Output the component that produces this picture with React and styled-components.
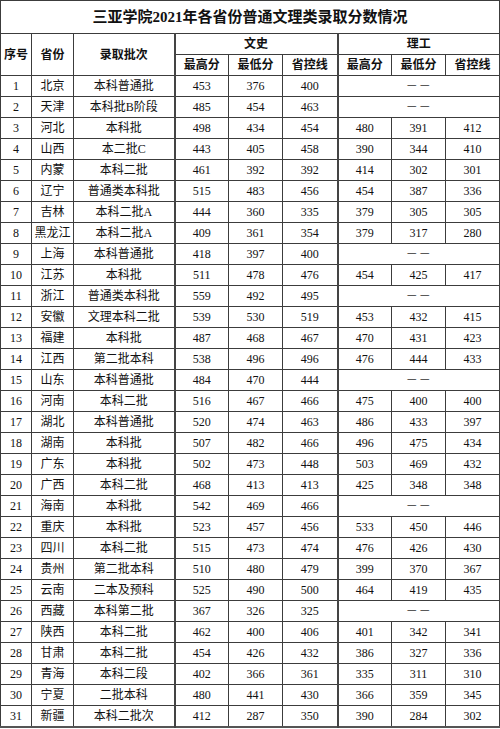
import React from 'react';
import styled, { createGlobalStyle } from 'styled-components';

const Global = createGlobalStyle`
  html, body { margin: 0; padding: 0; background: #fff; }
  body { font-family: "Liberation Serif", "Noto Sans CJK SC", serif; }
`;

const Table = styled.table`
  border-collapse: collapse;
  table-layout: fixed;
  width: 499px;
  font-size: 12px;
  color: #111;
  border-left: 1px solid #9a9a9a;
  border-top: 1px solid #8a8a8a;
  border-right: 1px solid #333;
  border-bottom: 2px solid #555;
`;

const Row = styled.tr`
  height: ${(p) => p.$h || 21}px;
`;

const Cell = styled.td`
  border: 1px solid #3c3c3c;
  border-left: ${(p) => (p.$sep ? '2px solid #444' : '1px solid #3c3c3c')};
  padding: 0;
  text-align: center;
  vertical-align: middle;
  line-height: 14px;
  white-space: nowrap;
  overflow: hidden;
`;

const HeadCell = styled(Cell).attrs({ as: 'th' })`
  font-weight: bold;
  color: #111;
`;

const TitleCell = styled.th`
  border: 1px solid #3c3c3c;
  padding: 0;
  text-align: center;
  vertical-align: middle;
  font-size: 15px;
  font-weight: bold;
  line-height: 18px;
  color: #111;
`;

const Dash = styled(Cell)`
  letter-spacing: 1px;
  color: #333;
`;

const widths = [31, 42, 101, 54, 54, 55, 54, 54, 54];

const data = [
  [1, '北京', '本科普通批', 453, 376, 400],
  [2, '天津', '本科批B阶段', 485, 454, 463],
  [3, '河北', '本科批', 498, 434, 454, 480, 391, 412],
  [4, '山西', '本二批C', 443, 405, 458, 390, 344, 410],
  [5, '内蒙', '本科二批', 461, 392, 392, 414, 302, 301],
  [6, '辽宁', '普通类本科批', 515, 483, 456, 454, 387, 336],
  [7, '吉林', '本科二批A', 444, 360, 335, 379, 305, 305],
  [8, '黑龙江', '本科二批A', 409, 361, 354, 379, 317, 280],
  [9, '上海', '本科普通批', 418, 397, 400],
  [10, '江苏', '本科批', 511, 478, 476, 454, 425, 417],
  [11, '浙江', '普通类本科批', 559, 492, 495],
  [12, '安徽', '文理本科二批', 539, 530, 519, 453, 432, 415],
  [13, '福建', '本科批', 487, 468, 467, 470, 431, 423],
  [14, '江西', '第二批本科', 538, 496, 496, 476, 444, 433],
  [15, '山东', '本科普通批', 484, 470, 444],
  [16, '河南', '本科二批', 516, 467, 466, 475, 400, 400],
  [17, '湖北', '本科普通批', 520, 474, 463, 486, 433, 397],
  [18, '湖南', '本科批', 507, 482, 466, 496, 475, 434],
  [19, '广东', '本科批', 502, 473, 448, 503, 469, 432],
  [20, '广西', '本科二批', 468, 413, 413, 425, 348, 348],
  [21, '海南', '本科批', 542, 469, 466],
  [22, '重庆', '本科批', 523, 457, 456, 533, 450, 446],
  [23, '四川', '本科二批', 515, 473, 474, 476, 426, 430],
  [24, '贵州', '第二批本科', 510, 480, 479, 399, 370, 367],
  [25, '云南', '二本及预科', 525, 490, 500, 464, 419, 435],
  [26, '西藏', '本科第二批', 367, 326, 325],
  [27, '陕西', '本科二批', 462, 400, 406, 401, 342, 341],
  [28, '甘肃', '本科二批', 454, 426, 432, 386, 327, 336],
  [29, '青海', '本科二段', 402, 366, 361, 335, 311, 310],
  [30, '宁夏', '二批本科', 480, 441, 430, 366, 359, 345],
  [31, '新疆', '本科二批次', 412, 287, 350, 390, 284, 302],
];

export default function App() {
  return (
    <>
      <Global />
      <Table>
        <colgroup>
          {widths.map((w, i) => (
            <col key={i} style={{ width: w }} />
          ))}
        </colgroup>
        <thead>
          <Row $h={33}>
            <TitleCell colSpan={9}>三亚学院2021年各省份普通文理类录取分数情况</TitleCell>
          </Row>
          <Row>
            <HeadCell rowSpan={2}>序号</HeadCell>
            <HeadCell rowSpan={2}>省份</HeadCell>
            <HeadCell rowSpan={2}>录取批次</HeadCell>
            <HeadCell colSpan={3} $sep>文史</HeadCell>
            <HeadCell colSpan={3} $sep>理工</HeadCell>
          </Row>
          <Row>
            <HeadCell $sep>最高分</HeadCell>
            <HeadCell>最低分</HeadCell>
            <HeadCell>省控线</HeadCell>
            <HeadCell $sep>最高分</HeadCell>
            <HeadCell>最低分</HeadCell>
            <HeadCell>省控线</HeadCell>
          </Row>
        </thead>
        <tbody>
          {data.map((r) => (
            <Row key={r[0]}>
              <Cell>{r[0]}</Cell>
              <Cell>{r[1]}</Cell>
              <Cell>{r[2]}</Cell>
              <Cell $sep>{r[3]}</Cell>
              <Cell>{r[4]}</Cell>
              <Cell>{r[5]}</Cell>
              {r.length > 6 ? (
                <>
                  <Cell $sep>{r[6]}</Cell>
                  <Cell>{r[7]}</Cell>
                  <Cell>{r[8]}</Cell>
                </>
              ) : (
                <Dash colSpan={3} $sep>－－</Dash>
              )}
            </Row>
          ))}
        </tbody>
      </Table>
    </>
  );
}
